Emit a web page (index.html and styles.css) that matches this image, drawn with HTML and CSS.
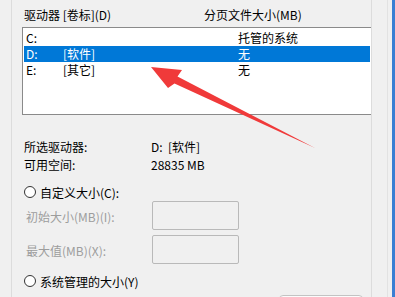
FILE: index.html
```html
<!DOCTYPE html>
<html>
<head>
  <title>虚拟内存</title>
  <link rel="stylesheet" href="styles.css">
</head>
<body>
  <div class="window">
    <div class="group">
      <div class="list-header">
        <span class="col-drive">驱动器 [卷标](D)</span>
        <span class="col-size">分页文件大小(MB)</span>
      </div>
      <div class="drive-list">
        <div class="drive-row">
          <span>C:</span><span></span><span>托管的系统</span>
        </div>
        <div class="drive-row selected">
          <span>D:</span><span>[软件]</span><span>无</span>
        </div>
        <div class="drive-row">
          <span>E:</span><span>[其它]</span><span>无</span>
        </div>
      </div>

      <div class="info">
        <div class="info-row"><span class="info-label">所选驱动器:</span><span>D:&nbsp;&nbsp;[软件]</span></div>
        <div class="info-row"><span class="info-label">可用空间:</span><span>28835 MB</span></div>
      </div>

      <div class="radio-row custom">
        <span class="radio"></span><span>自定义大小(C):</span>
      </div>
      <div class="field-row">
        <span class="field-label">初始大小(MB)(I):</span>
        <span class="field-box"></span>
      </div>
      <div class="field-row">
        <span class="field-label">最大值(MB)(X):</span>
        <span class="field-box"></span>
      </div>
      <div class="radio-row system">
        <span class="radio"></span><span>系统管理的大小(Y)</span>
      </div>
      <div class="button-row">
        <span class="button"></span>
      </div>
    </div>
    <div class="side"></div>
    <div class="frame"></div>
  </div>

  <svg class="arrow" width="395" height="297" viewBox="0 0 395 297">
    <polygon points="151,67 182,70 177.5,76.5 315,148 174.5,83.5 168,88" fill="#f03a3a"/>
  </svg>
</body>
</html>
```

FILE: styles.css
```css
:root {
  --bg: #f0f0f0;
  --text: #000;
  --disabled: #9d9d9d;
  --group-line: #dcdcdc;
  --list-border: #8a8a8a;
  --select: #0078d7;
  --field-border: #b9b9b9;
  --frame: #3a7fd3;
}

html, body {
  margin: 0;
  padding: 0;
}

body {
  width: 395px;
  height: 297px;
  overflow: hidden;
  background-color: var(--bg);
  color: var(--text);
  font-family: "Noto Sans CJK SC", "Noto Sans", sans-serif;
  font-size: 12px;
  position: relative;
}

.window {
  display: flex;
  height: 297px;
}

.group {
  margin-left: 11px;
  width: 367px;
  border-left: 1px solid var(--group-line);
  border-right: 1px solid var(--group-line);
  padding-left: 10px;
  box-sizing: border-box;
  display: flex;
  flex-direction: column;
  overflow: hidden;
}

.group > * {
  flex-shrink: 0;
}

.list-header {
  display: flex;
  height: 16px;
  line-height: 16px;
  margin-top: 7px;
  padding-left: 2px;
}

.col-drive {
  width: 180px;
}

.drive-list {
  margin-top: 4px;
  margin-right: -1px;
  height: 88px;
  box-sizing: border-box;
  border: 1px solid var(--list-border);
  background-color: #fff;
  padding: 2px 1px 0 1px;
}

.drive-row {
  display: grid;
  grid-template-columns: 37px 175px 1fr;
  height: 16px;
  line-height: 16px;
  padding-left: 2px;
}

.drive-row.selected {
  background-color: var(--select);
  color: #fff;
}

.info {
  margin-top: 23px;
  padding-left: 2px;
}

.info-row {
  display: flex;
  height: 18px;
  line-height: 18px;
}

.info-label {
  width: 127px;
}

.radio-row {
  display: flex;
  align-items: center;
  height: 18px;
  gap: 4px;
  padding-left: 2px;
}

.radio-row.custom {
  margin-top: 9px;
}

.radio-row.system {
  margin-top: 3px;
}

.radio {
  width: 10px;
  height: 10px;
  border: 1px solid #333;
  border-radius: 50%;
  background-color: #fff;
}

.field-row {
  display: flex;
  align-items: center;
  height: 29px;
  margin-bottom: 5px;
  padding-left: 4px;
}

.field-label {
  width: 126px;
  color: var(--disabled);
  padding-top: 2px;
}

.field-box {
  width: 87px;
  height: 29px;
  box-sizing: border-box;
  border: 1px solid var(--field-border);
  border-radius: 2px;
}

.button-row {
  display: flex;
  justify-content: flex-end;
  margin-top: 5px;
  padding-right: 8px;
}

.button {
  width: 84px;
  height: 20px;
  box-sizing: border-box;
  border: 1px solid #c3c3c3;
  border-radius: 4px;
  background-color: #fbfbfb;
}

.side {
  width: 14px;
  border-right: 1px solid #e2e2e2;
  margin-left: 1px;
}

.frame {
  width: 3px;
  margin-left: 4px;
  background-color: var(--frame);
}

.arrow {
  position: absolute;
  left: 0;
  top: 0;
}
```
